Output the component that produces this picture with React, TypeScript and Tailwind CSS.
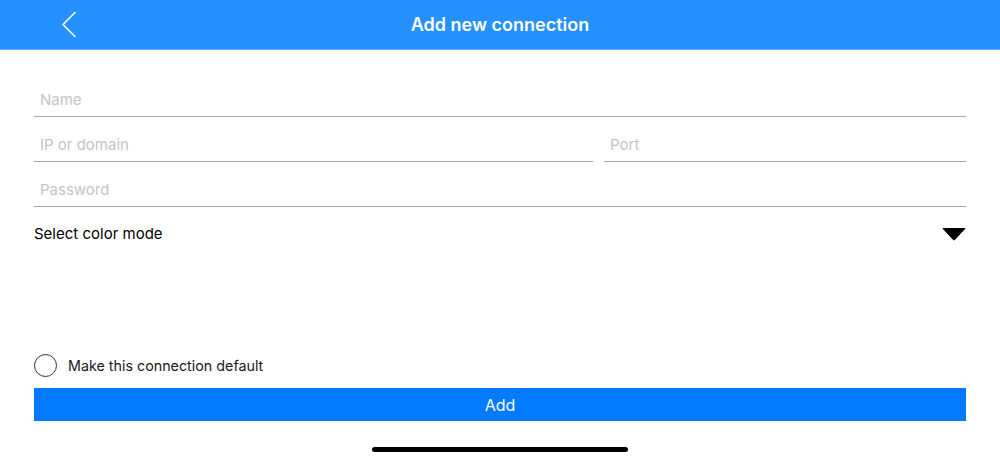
import React from "react";

export default function App() {
  const font = { fontFamily: "Inter, 'Noto Sans', sans-serif" };
  return (
    <div className="w-[1000px] h-[462px] bg-white flex flex-col overflow-hidden" style={font}>
      <div className="h-[50px] bg-[#2491ff] border-b border-[#62aefc] flex items-center justify-center relative shrink-0">
        <svg className="absolute left-[60px] top-[11px]" width="18" height="28" viewBox="0 0 18 28" fill="none">
          <path d="M15 1.5 L3 13.5 L15 25.5" stroke="white" strokeWidth="1.6" strokeLinecap="round" strokeLinejoin="round" />
        </svg>
        <span className="text-white text-[18px] font-semibold tracking-[0px]">Add new connection</span>
      </div>
      <div className="px-[34px] pt-[22px] flex flex-col flex-1">
        <div className="h-[45px] border-b border-[#a8a8a8] flex items-end pb-[7px] pl-[6px]">
          <span className="text-[15px] leading-[18px] text-[#c4c4c8]">Name</span>
        </div>
        <div className="flex gap-[11px]">
          <div className="w-[559px] h-[45px] border-b border-[#a8a8a8] flex items-end pb-[7px] pl-[6px]">
            <span className="text-[15px] leading-[18px] text-[#c4c4c8]">IP or domain</span>
          </div>
          <div className="flex-1 h-[45px] border-b border-[#a8a8a8] flex items-end pb-[7px] pl-[6px]">
            <span className="text-[15px] leading-[18px] text-[#c4c4c8]">Port</span>
          </div>
        </div>
        <div className="h-[45px] border-b border-[#a8a8a8] flex items-end pb-[7px] pl-[6px]">
          <span className="text-[15px] leading-[18px] text-[#c4c4c8]">Password</span>
        </div>
        <div className="h-[54px] flex items-center justify-between">
          <span className="text-[15px] text-black">Select color mode</span>
          <svg width="24" height="14" viewBox="0 0 24 14">
            <path d="M1 1.5 L23 1.5 L12.8 12.6 Q12 13.4 11.2 12.6 Z" fill="black" stroke="black" strokeWidth="1" strokeLinejoin="round" />
          </svg>
        </div>
        <div className="flex-1" />
        <div className="h-[24px] flex items-center gap-[11px]">
          <div className="w-[23px] h-[23px] rounded-full border-[1.5px] border-[#333]" />
          <span className="text-[14.3px] leading-[18px] text-[#1a1a1a] pt-[1px]">Make this connection default</span>
        </div>
        <div className="mt-[11px] h-[33px] bg-[#007aff] flex items-center justify-center">
          <span className="text-white text-[16px]">Add</span>
        </div>
        <div className="h-[41px] flex justify-center pt-[26px]">
          <div className="w-[256px] h-[5px] rounded-full bg-black" />
        </div>
      </div>
    </div>
  );
}
